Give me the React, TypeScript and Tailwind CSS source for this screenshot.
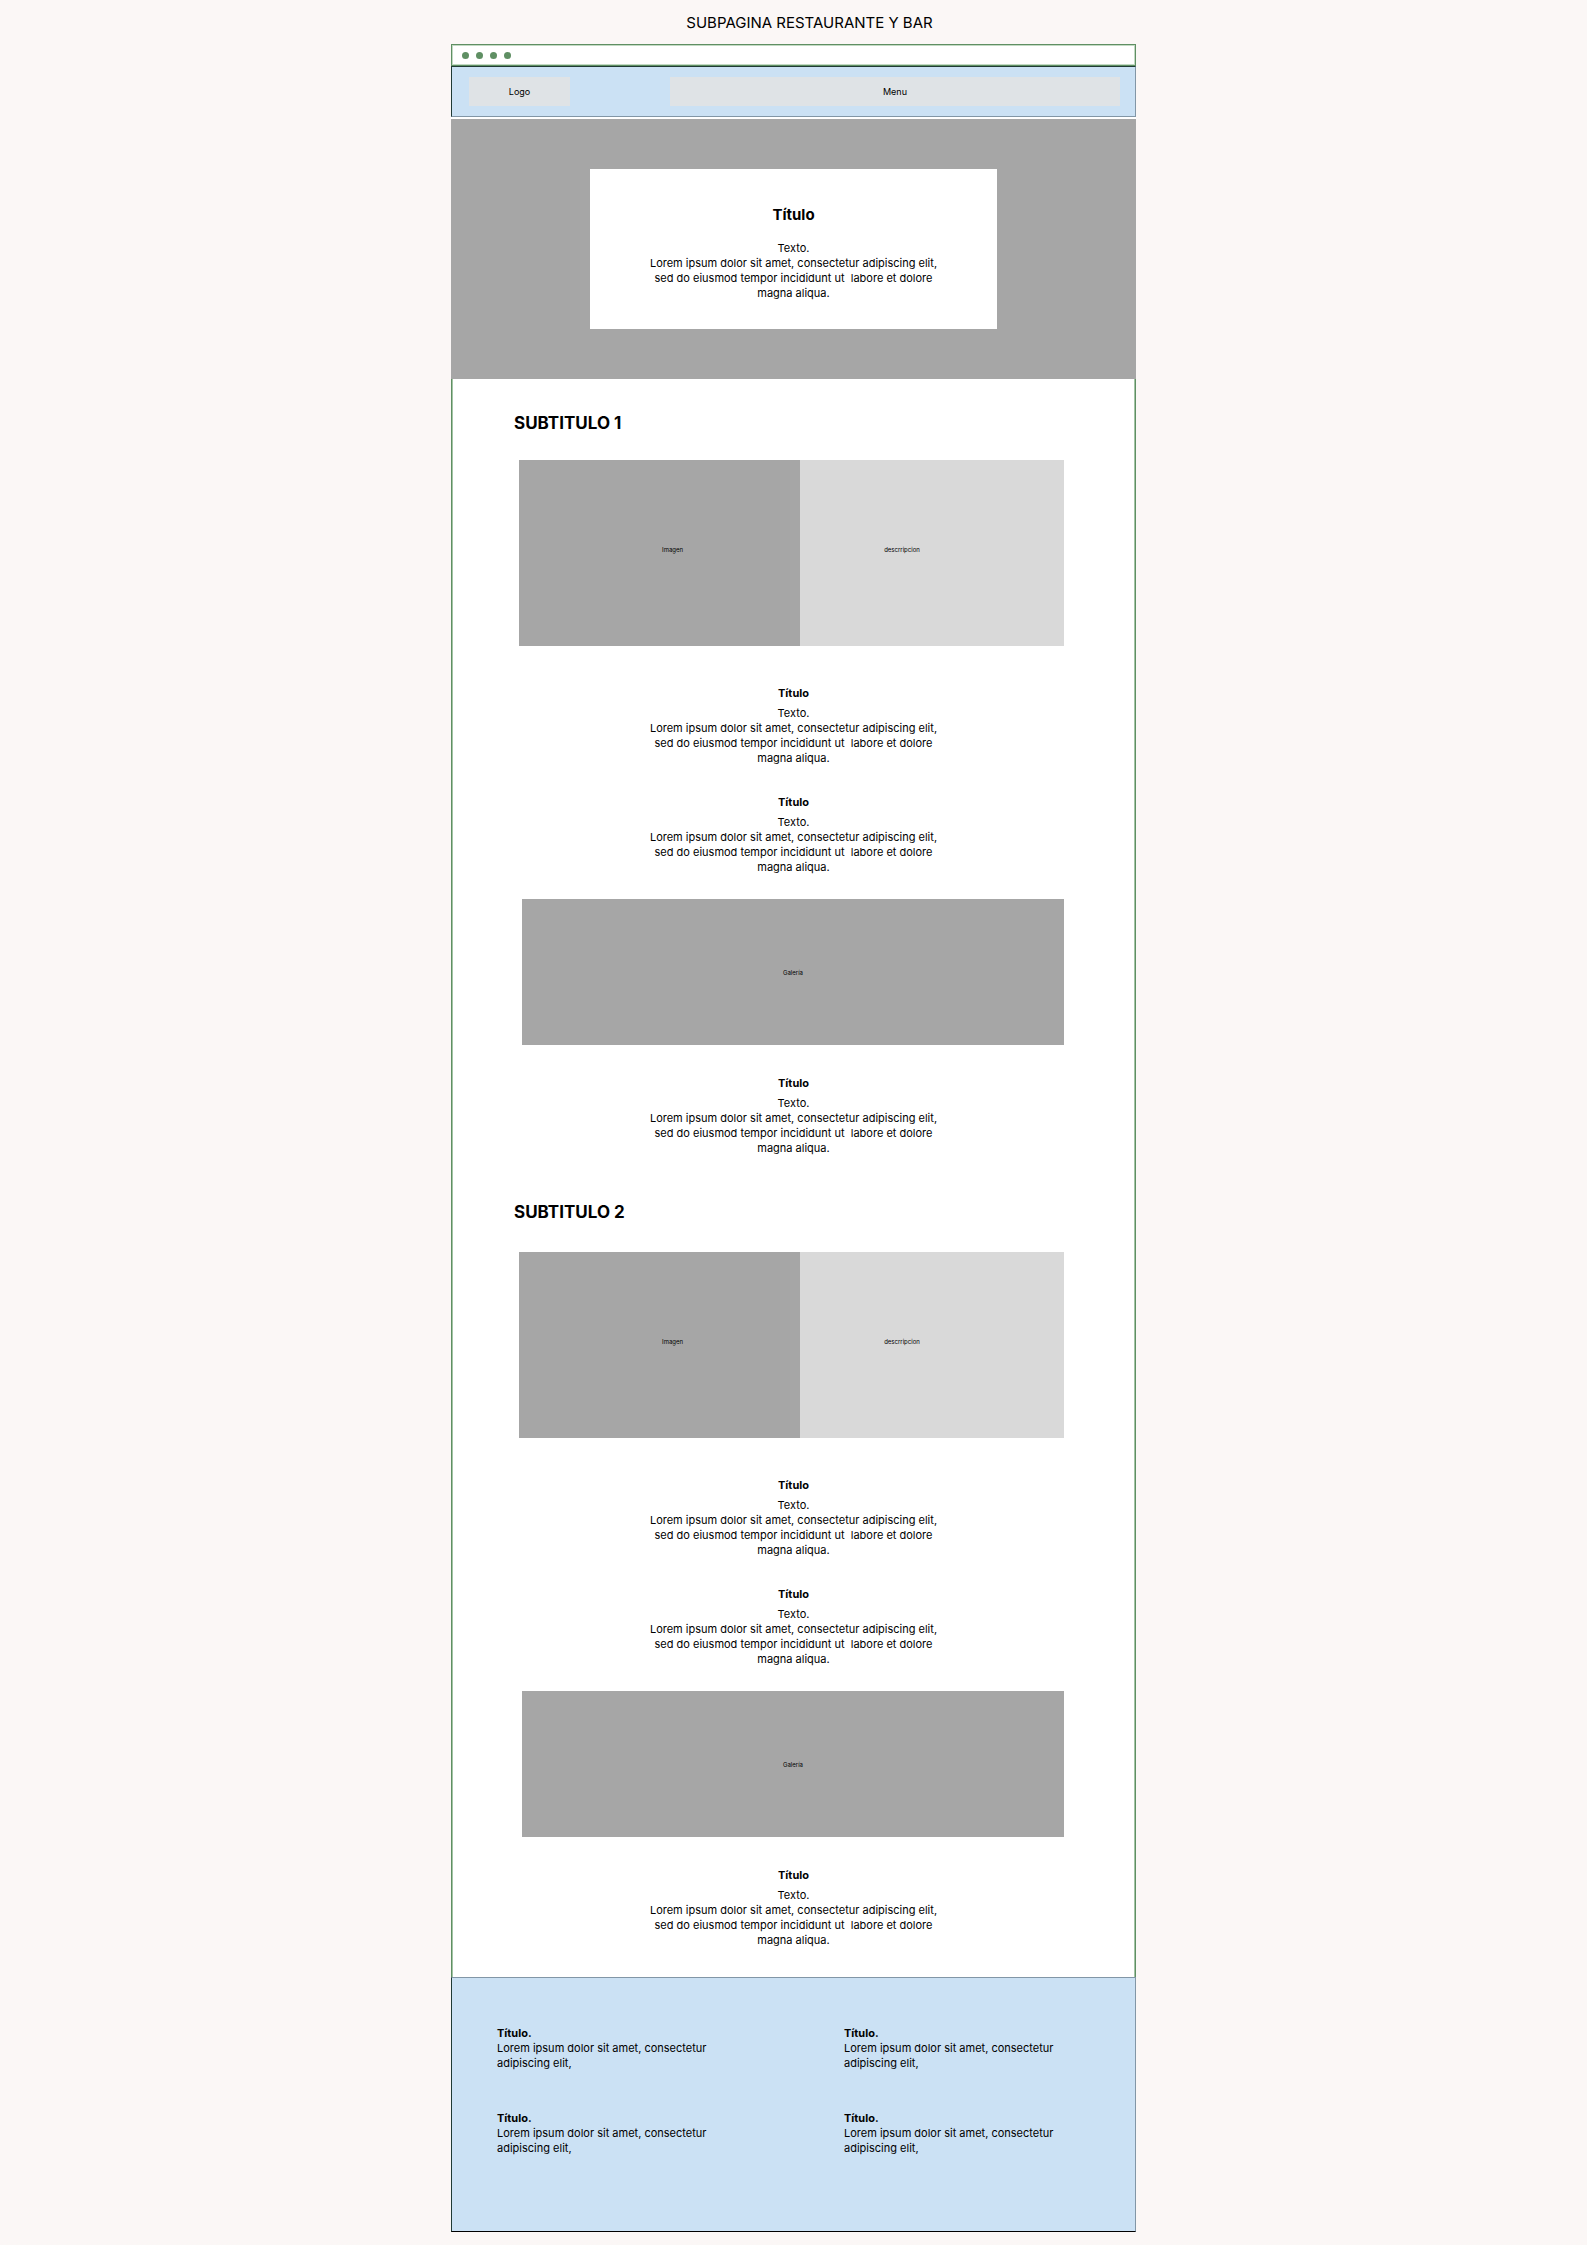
const LOREM = ["Lorem ipsum dolor sit amet, consectetur adipiscing elit,", "sed do eiusmod tempor incididunt ut\u00a0 labore et dolore", "magna aliqua."];

function Paragraph() {
  return (
    <p className="text-[11px] leading-[15px]">
      <span className="block leading-4">Texto.</span>
      {LOREM.map((line) => (
        <span key={line} className="block">{line}</span>
      ))}
    </p>
  );
}

function TextBlock() {
  return (
    <article className="flex flex-col gap-1 text-center">
      <h3 className="text-[11px] leading-[15px] font-bold">Título</h3>
      <Paragraph />
    </article>
  );
}

function Section({ title, spacing }: { title: string; spacing: string }) {
  return (
    <section>
      <h2 className="pl-[62px] text-[17px] leading-6 font-bold">{title}</h2>
      <div className={`mr-[71px] ml-[67px] grid h-[186px] grid-cols-[281fr_264fr] text-[6px] ${spacing}`}>
        <figure className="flex items-center justify-center bg-[#a6a6a6] pb-2 pl-[26px]">Imagen</figure>
        <div className="flex items-center justify-center bg-[#d9d9d9] pr-[60px] pb-2">descrripcion</div>
      </div>
      <div className="mt-10 flex flex-col gap-[29px]">
        <TextBlock />
        <TextBlock />
      </div>
      <figure className="mt-6 mr-[71px] ml-[70px] flex h-[146px] items-center justify-center bg-[#a6a6a6] text-[6px]">Galería</figure>
      <div className="mt-[31px]">
        <TextBlock />
      </div>
    </section>
  );
}

function FooterItem() {
  return (
    <article className="text-[11px] leading-[15px]">
      <h3 className="leading-4 font-bold">Título.</h3>
      <p>Lorem ipsum dolor sit amet, consectetur<br />adipiscing elit,</p>
    </article>
  );
}

export default function App() {
  return (
    <div className="min-h-screen bg-[#fbf7f6] pb-[13px] font-['Inter',sans-serif] text-black">
      <div className="mx-auto w-full max-w-[685px]">
        <h1 className="pt-[11px] pb-[9px] pl-8 text-center text-[15px] leading-6">SUBPAGINA RESTAURANTE Y BAR</h1>
        <div className="flex h-[22px] items-center gap-[7px] border border-[#5f8f63] bg-white pl-2.5 shadow-[inset_0_0_0_1px_#c3dac4]">
          {[0, 1, 2, 3].map((dot) => (
            <span key={dot} className="size-[7px] rounded-full bg-[#5f8f63]" />
          ))}
        </div>
        <header className="flex h-[51px] items-center justify-between border border-t-[#203a35] border-r-[#8296a6] border-b-[#8296a6] border-l-[#203a35] bg-[#cbe1f4] pr-[15px] pl-[17px] text-[9px]">
          <a href="#" className="flex h-[29px] w-[101px] items-center justify-center bg-[#dfe3e6]">Logo</a>
          <nav className="flex h-[29px] w-[450px] items-center justify-center bg-[#dfe3e6]">
            <a href="#">Menu</a>
          </nav>
        </header>
        <section className="border-t-2 border-white bg-[#a6a6a6] py-[50px]">
          <div className="mx-auto flex h-[160px] max-w-[407px] flex-col justify-center gap-[15px] bg-white pt-2 text-center">
            <h2 className="text-[15px] leading-5 font-bold">Título</h2>
            <Paragraph />
          </div>
        </section>
        <main className="flex flex-col gap-11 border-x border-[#5f8f63] bg-white pt-8 pb-[29px] shadow-[inset_1px_0_#a3c4a5,inset_-1px_0_#a3c4a5]">
          <Section title="SUBTITULO 1" spacing="mt-[25px]" />
          <Section title="SUBTITULO 2" spacing="mt-[28px]" />
        </main>
        <footer className="grid grid-cols-[347px_1fr] gap-y-[39px] border border-t-[#8296a6] border-r-[#8296a6] border-b-black border-l-[#203a35] bg-[#cbe1f4] pt-[47px] pb-[75px] pl-[45px]">
          <FooterItem />
          <FooterItem />
          <FooterItem />
          <FooterItem />
        </footer>
      </div>
    </div>
  );
}
